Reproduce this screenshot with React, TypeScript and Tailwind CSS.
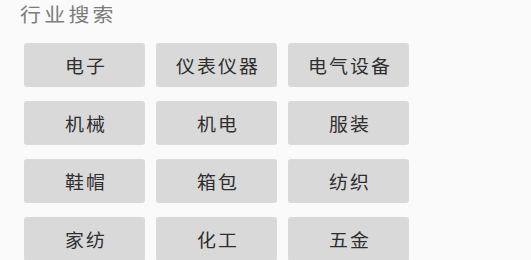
const industries = [
  "电子",
  "仪表仪器",
  "电气设备",
  "机械",
  "机电",
  "服装",
  "鞋帽",
  "箱包",
  "纺织",
  "家纺",
  "化工",
  "五金",
];

export default function App() {
  return (
    <div className="w-[531px] h-[260px] overflow-hidden bg-[#fafafa] font-['Noto_Sans_CJK_SC',sans-serif]">
      {/* Section title */}
      <div className="h-[43px] pl-[20px]">
        <span className="inline-block origin-left scale-x-110 text-[19px] leading-[27px] tracking-[3px] text-[#7c7c7c]">
          行业搜索
        </span>
      </div>

      {/* Industry buttons */}
      <div className="ml-[24px] grid grid-cols-[121px_121px_121px] gap-x-[11px] gap-y-[14px]">
        {industries.map((name) => (
          <button
            key={name}
            className="flex h-[44px] items-center justify-center rounded-[3px] bg-[#d9d9d9]"
          >
            <span className="inline-block scale-x-105 pl-[2px] text-[18px] tracking-[2px] text-[#2e2e2e]">
              {name}
            </span>
          </button>
        ))}
      </div>
    </div>
  );
}
